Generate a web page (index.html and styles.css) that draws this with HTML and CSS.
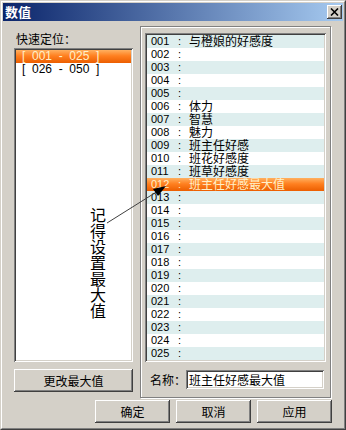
FILE: index.html
```html
<!DOCTYPE html>
<html>
<head>
<meta charset="utf-8">
<link rel="stylesheet" href="styles.css">
</head>
<body>
<div class="window">
  <div class="frame">
    <div class="titlebar">
      <span class="title">数值</span>
      <span class="close"><svg width="9" height="8" viewBox="0 0 9 8"><path d="M1 0.5 L8 7.5 M8 0.5 L1 7.5" stroke="#000" stroke-width="1.6" fill="none"/></svg></span>
    </div>
    <div class="content">
      <div class="main">
        <div class="left">
          <div class="label">快速定位：</div>
          <div class="listbox">
            <div class="litem sel">[  001  -  025  ]</div>
            <div class="litem">[  026  -  050  ]</div>
          </div>
          <div class="btn wide">更改最大值</div>
        </div>
        <div class="group">
          <div class="vlist">
            <div class="row"><span class="num">001</span><span class="colon">:</span><span class="name">与橙娘的好感度</span></div>
            <div class="row"><span class="num">002</span><span class="colon">:</span><span class="name"></span></div>
            <div class="row"><span class="num">003</span><span class="colon">:</span><span class="name"></span></div>
            <div class="row"><span class="num">004</span><span class="colon">:</span><span class="name"></span></div>
            <div class="row"><span class="num">005</span><span class="colon">:</span><span class="name"></span></div>
            <div class="row"><span class="num">006</span><span class="colon">:</span><span class="name">体力</span></div>
            <div class="row"><span class="num">007</span><span class="colon">:</span><span class="name">智慧</span></div>
            <div class="row"><span class="num">008</span><span class="colon">:</span><span class="name">魅力</span></div>
            <div class="row"><span class="num">009</span><span class="colon">:</span><span class="name">班主任好感</span></div>
            <div class="row"><span class="num">010</span><span class="colon">:</span><span class="name">班花好感度</span></div>
            <div class="row"><span class="num">011</span><span class="colon">:</span><span class="name">班草好感度</span></div>
            <div class="row sel"><span class="num">012</span><span class="colon">:</span><span class="name">班主任好感最大值</span></div>
            <div class="row"><span class="num">013</span><span class="colon">:</span><span class="name"></span></div>
            <div class="row"><span class="num">014</span><span class="colon">:</span><span class="name"></span></div>
            <div class="row"><span class="num">015</span><span class="colon">:</span><span class="name"></span></div>
            <div class="row"><span class="num">016</span><span class="colon">:</span><span class="name"></span></div>
            <div class="row"><span class="num">017</span><span class="colon">:</span><span class="name"></span></div>
            <div class="row"><span class="num">018</span><span class="colon">:</span><span class="name"></span></div>
            <div class="row"><span class="num">019</span><span class="colon">:</span><span class="name"></span></div>
            <div class="row"><span class="num">020</span><span class="colon">:</span><span class="name"></span></div>
            <div class="row"><span class="num">021</span><span class="colon">:</span><span class="name"></span></div>
            <div class="row"><span class="num">022</span><span class="colon">:</span><span class="name"></span></div>
            <div class="row"><span class="num">023</span><span class="colon">:</span><span class="name"></span></div>
            <div class="row"><span class="num">024</span><span class="colon">:</span><span class="name"></span></div>
            <div class="row"><span class="num">025</span><span class="colon">:</span><span class="name"></span></div>
          </div>
          <div class="namerow">
            <span class="nlabel">名称：</span>
            <div class="textbox">班主任好感最大值</div>
          </div>
        </div>
      </div>
      <div class="buttons">
        <div class="btn">确定</div>
        <div class="btn">取消</div>
        <div class="btn">应用</div>
      </div>
    </div>
  </div>
  <div class="note">记得设置最大值</div>
  <svg class="arrow" width="346" height="430" viewBox="0 0 346 430">
    <line x1="107" y1="223" x2="158" y2="191" stroke="#404040" stroke-width="1"/>
    <polygon points="166,186 158,196 153,189" fill="#000"/>
  </svg>
</div>
</body>
</html>
```

FILE: styles.css
```css
body {
  margin: 0;
  background: #D4D0C8;
  font-family: "Liberation Sans", "Noto Sans CJK SC", sans-serif;
  font-size: 12px;
  color: #000;
}

.window {
  position: relative;
  width: 346px;
  height: 430px;
  box-sizing: border-box;
  background: #D4D0C8;
  border: 1px solid;
  border-color: #D4D0C8 #404040 #404040 #D4D0C8;
}

.frame {
  height: 100%;
  box-sizing: border-box;
  border: 1px solid;
  border-color: #fff #808080 #808080 #fff;
  padding: 1px;
  display: flex;
  flex-direction: column;
}

.titlebar {
  height: 18px;
  flex: none;
  background: linear-gradient(to right, #0A246A, #A6CAF0);
  display: flex;
  align-items: center;
  justify-content: space-between;
  padding: 0 1px 0 2px;
}

.title {
  color: #fff;
  font-weight: bold;
  font-size: 13px;
  line-height: 18px;
  font-family: "Noto Sans CJK SC", sans-serif;
}

.close {
  width: 15px;
  height: 14px;
  background: #D4D0C8;
  box-shadow: inset -1px -1px #404040, inset 1px 1px #fff, inset -2px -2px #808080, inset 2px 2px #D4D0C8;
  display: flex;
  align-items: center;
  justify-content: center;
}

.content {
  flex: 1;
  display: flex;
  flex-direction: column;
  padding: 5px 11px 0 11px;
}

.main {
  display: flex;
  gap: 7px;
  height: 372px;
}

.left {
  width: 119px;
  display: flex;
  flex-direction: column;
}

.label {
  margin-top: 6px;
  height: 14px;
  line-height: 14px;
  padding-left: 2px;
  font-family: "Noto Sans CJK SC", sans-serif;
  font-size: 12px;
}

.listbox {
  margin-top: 2px;
  height: 314px;
  box-sizing: border-box;
  background: #fff;
  padding: 2px;
  box-shadow: inset 1px 1px #808080, inset -1px -1px #fff, inset 2px 2px #404040, inset -2px -2px #D4D0C8;
}

.litem {
  height: 13px;
  line-height: 13px;
  padding-left: 6px;
  white-space: pre;
  font-size: 12px;
}

.sel {
  background: linear-gradient(#FFB060, #FF8020 45%, #EC5E00);
  color: #FFF0C8;
}

.btn {
  width: 75px;
  height: 23px;
  box-sizing: border-box;
  background: #D4D0C8;
  box-shadow: inset -1px -1px #404040, inset 1px 1px #fff, inset -2px -2px #808080, inset 2px 2px #D4D0C8;
  display: flex;
  align-items: center;
  justify-content: center;
  font-family: "Noto Sans CJK SC", sans-serif;
  font-size: 12px;
}

.wide {
  width: 119px;
  margin-top: 7px;
}

.group {
  width: 191px;
  box-sizing: border-box;
  border: 1px solid #808080;
  box-shadow: inset 1px 1px #fff, 1px 1px #fff;
  padding: 6px 4px 0 4px;
  display: flex;
  flex-direction: column;
}

.vlist {
  height: 329px;
  box-sizing: border-box;
  background: #fff;
  padding: 2px;
  box-shadow: inset 1px 1px #808080, inset -1px -1px #fff, inset 2px 2px #404040, inset -2px -2px #D4D0C8;
}

.row {
  height: 13px;
  line-height: 13px;
  display: flex;
  font-size: 11px;
  padding-left: 4px;
}

.row:nth-child(odd) {
  background: #DEEEEE;
}

.row.sel {
  background: linear-gradient(#FFB060, #FF8020 45%, #EC5E00);
  color: #FFF0C8;
}

.num {
  width: 27px;
}

.colon {
  width: 11px;
}

.name {
  font-family: "Noto Sans CJK SC", sans-serif;
  font-size: 12px;
  line-height: 12px;
  white-space: nowrap;
}

.namerow {
  margin-top: 8px;
  height: 19px;
  display: flex;
  align-items: center;
  padding-left: 5px;
}

.nlabel {
  width: 36px;
  font-family: "Noto Sans CJK SC", sans-serif;
  font-size: 12px;
}

.textbox {
  width: 138px;
  height: 19px;
  box-sizing: border-box;
  background: #fff;
  padding: 0 3px;
  line-height: 19px;
  box-shadow: inset 1px 1px #808080, inset -1px -1px #fff, inset 2px 2px #404040, inset -2px -2px #D4D0C8;
  font-family: "Noto Sans CJK SC", sans-serif;
  font-size: 12px;
}

.buttons {
  display: flex;
  justify-content: flex-end;
  gap: 6px;
  margin-top: 2px;
}

.note {
  position: absolute;
  left: 89px;
  top: 206px;
  writing-mode: vertical-rl;
  font-family: "Noto Sans CJK SC", sans-serif;
  font-size: 16px;
  line-height: 16px;
}

.arrow {
  position: absolute;
  left: -1px;
  top: -1px;
  pointer-events: none;
}
```
